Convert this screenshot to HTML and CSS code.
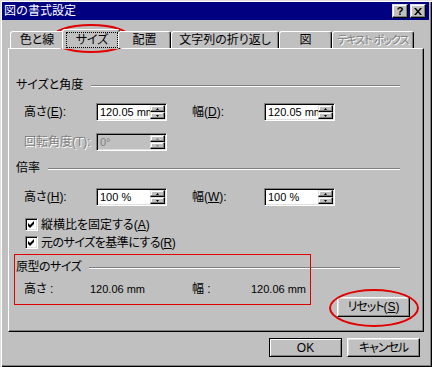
FILE: index.html
```html
<!DOCTYPE html>
<html lang="ja">
<head>
<meta charset="utf-8">
<title>図の書式設定</title>
<link rel="stylesheet" href="styles.css">
</head>
<body>
<div class="dialog">
  <div class="titlebar">
    <span class="title">図の書式設定</span>
    <span class="tb-btns">
      <span class="tbb help">?</span>
      <span class="tbb close"><svg width="8" height="7" viewBox="0 0 8 7"><path d="M0 0h2l2 2.5L6 0h2L5 3.5 8 7H6L4 4.5 2 7H0l3-3.5z" fill="#000"/></svg></span>
    </span>
  </div>
  <div class="tabs">
    <div class="tab t1">色と線</div>
    <div class="tab sel t2"><span class="focus">サイズ</span></div>
    <div class="tab t3">配置</div>
    <div class="tab t4">文字列の折り返し</div>
    <div class="tab t5">図</div>
    <div class="tab t6 dis"><span class="kana">テキスト ボックス</span></div>
  </div>
  <div class="panel">
    <div class="ghead"><span>サイズと角度</span><i class="rule"></i></div>
    <div class="row r1">
      <span class="lbl">高さ(<u>E</u>):</span>
      <div class="spin"><span class="val">120.05 mm</span><span class="btns"><span class="sb"><svg width="3" height="2" viewBox="0 0 3 2"><path d="M1.5 0L3 2H0z" fill="#000"/></svg></span><span class="sb"><svg width="3" height="2" viewBox="0 0 3 2"><path d="M0 0h3L1.5 2z" fill="#000"/></svg></span></span></div>
      <span class="lbl lbl2">幅(<u>D</u>):</span>
      <div class="spin"><span class="val">120.05 mm</span><span class="btns"><span class="sb"><svg width="3" height="2" viewBox="0 0 3 2"><path d="M1.5 0L3 2H0z" fill="#000"/></svg></span><span class="sb"><svg width="3" height="2" viewBox="0 0 3 2"><path d="M0 0h3L1.5 2z" fill="#000"/></svg></span></span></div>
    </div>
    <div class="row r2">
      <span class="lbl dis">回転角度(T):</span>
      <div class="spin off"><span class="val">0°</span><span class="btns"><span class="sb"><svg width="3" height="2" viewBox="0 0 3 2"><path d="M1.5 0L3 2H0z" fill="#808080"/></svg></span><span class="sb"><svg width="3" height="2" viewBox="0 0 3 2"><path d="M0 0h3L1.5 2z" fill="#808080"/></svg></span></span></div>
    </div>
    <div class="ghead g2"><span>倍率</span><i class="rule"></i></div>
    <div class="row r3">
      <span class="lbl">高さ(<u>H</u>):</span>
      <div class="spin"><span class="val">100 %</span><span class="btns"><span class="sb"><svg width="3" height="2" viewBox="0 0 3 2"><path d="M1.5 0L3 2H0z" fill="#000"/></svg></span><span class="sb"><svg width="3" height="2" viewBox="0 0 3 2"><path d="M0 0h3L1.5 2z" fill="#000"/></svg></span></span></div>
      <span class="lbl lbl2">幅(<u>W</u>):</span>
      <div class="spin"><span class="val">100 %</span><span class="btns"><span class="sb"><svg width="3" height="2" viewBox="0 0 3 2"><path d="M1.5 0L3 2H0z" fill="#000"/></svg></span><span class="sb"><svg width="3" height="2" viewBox="0 0 3 2"><path d="M0 0h3L1.5 2z" fill="#000"/></svg></span></span></div>
    </div>
    <div class="chk c1"><span class="box"><svg width="7" height="7" viewBox="0 0 7 7"><path d="M0 2L2 4L6 0V3L2 7L0 5Z" fill="#000"/></svg></span><span>縦横比を固定する(<u>A</u>)</span></div>
    <div class="chk c2"><span class="box"><svg width="7" height="7" viewBox="0 0 7 7"><path d="M0 2L2 4L6 0V3L2 7L0 5Z" fill="#000"/></svg></span><span class="tight">元のサイズを基準にする(<u>R</u>)</span></div>
    <div class="ghead g3"><span class="tight">原型のサイズ</span><i class="rule"></i></div>
    <div class="lastrow">
      <div class="vals">
        <span class="vl1">高さ :</span>
        <span class="num vv1">120.06 mm</span>
        <span class="vl2">幅 :</span>
        <span class="num">120.06 mm</span>
      </div>
      <div class="btn reset"><span class="kana">リセット</span>(<u>S</u>)</div>
    </div>
  </div>
  <div class="actions">
    <div class="btn default">OK</div>
    <div class="btn"><span class="kana">キャンセル</span></div>
  </div>
  <div class="mark mark-tab"></div>
  <div class="mark mark-box"></div>
  <div class="mark mark-reset"></div>
</div>
</body>
</html>
```

FILE: styles.css
```css
* { box-sizing: border-box; }
html, body { margin: 0; padding: 0; }
body {
  background: #c0c0c0;
  font-family: "Liberation Sans", "Noto Sans CJK JP", sans-serif;
  font-size: 12px;
  color: #000;
  font-feature-settings: "palt";
}
u { text-decoration: underline; text-underline-offset: 1px; }
.kana { letter-spacing: -1px; }
.tight { letter-spacing: -0.5px; }

.dialog {
  position: relative;
  width: 432px;
  height: 367px;
  background: #c0c0c0;
  padding-top: 2px;
  box-shadow: inset 1px 1px #dfdfdf, inset 2px 2px #fff, inset -1px -1px #000, inset -2px -2px #808080;
  overflow: hidden;
}

.titlebar {
  margin: 0 3px 0 2px;
  height: 18px;
  background: #000080;
  color: #fff;
  display: flex;
  align-items: center;
  padding: 0 3px 0 2px;
}
.title { font-feature-settings: normal; line-height: 14px; }
.tb-btns { margin-left: auto; display: flex; gap: 2px; }
.tbb {
  width: 16px; height: 14px;
  background: #c0c0c0;
  border: 1px solid; border-color: #dfdfdf #000 #000 #dfdfdf;
  box-shadow: inset -1px -1px #808080, inset 1px 1px #fff;
  display: flex; align-items: center; justify-content: center;
  color: #000;
  font-weight: bold;
  font-size: 11px;
  line-height: 10px;
}

.tabs {
  margin: 9px 0 0 8px;
  padding-left: 2px;
  height: 19px;
  display: flex;
  align-items: flex-end;
  position: relative;
  z-index: 1;
}
.tab {
  height: 17px;
  background: #c0c0c0;
  border-top: 1px solid #fff;
  border-left: 1px solid #fff;
  border-right: 1px solid #000;
  box-shadow: inset -1px 0 #808080;
  border-radius: 3px 3px 0 0;
  display: flex; align-items: center; justify-content: center;
  white-space: nowrap;
  line-height: 14px;
}
.t1 { width: 54px; }
.t2 { width: 58px; }
.t3 { width: 53px; }
.t4 { width: 108px; }
.t5 { width: 53px; }
.t6 { width: 82px; font-size: 11px; }
.tab.sel {
  height: 20px;
  margin: 0 -2px -1px;
  align-items: stretch;
  padding: 2px 1px 1px 3px;
}
.focus {
  flex: 1;
  border: 1px dotted #000;
  display: flex; align-items: center; justify-content: center;
}
.dis { color: #808080; text-shadow: 1px 1px #fff; }

.panel {
  margin-left: 8px;
  width: 416px;
  height: 284px;
  border-top: 1px solid #fff;
  border-left: 1px solid #fff;
  border-right: 1px solid #000;
  border-bottom: 1px solid #000;
  box-shadow: inset -1px -1px #808080;
  padding: 29px 13px 0 7px;
  display: flex;
  flex-direction: column;
}

.ghead {
  display: flex;
  align-items: center;
  height: 14px;
  margin-right: 10px;
  line-height: 14px;
  white-space: nowrap;
}
.rule {
  flex: 1;
  height: 2px;
  margin: 2px 0 0 8px;
  border-top: 1px solid #808080;
  border-bottom: 1px solid #fff;
}

.row {
  display: flex;
  align-items: center;
  height: 18px;
  padding-left: 8px;
  white-space: nowrap;
}
.r1 { margin-top: 11px; }
.r2 { margin-top: 12px; }
.g2 { margin-top: 10px; }
.r3 { margin-top: 13px; }
.lbl { width: 72px; line-height: 14px; }
.lbl2 { margin-left: 25px; }

.spin {
  width: 71px; height: 18px;
  display: flex;
  border: 1px solid; border-color: #808080 #fff #fff #808080;
  box-shadow: inset 1px 1px #000, inset -1px -1px #dfdfdf;
  background: #fff;
  padding: 1px;
}
.spin .val {
  flex: 1;
  overflow: hidden;
  white-space: nowrap;
  font-size: 11px;
  line-height: 14px;
  padding-left: 2px;
}
.spin .btns { width: 15px; display: flex; flex-direction: column; }
.sb {
  flex: 1;
  background: #c0c0c0;
  border: 1px solid; border-color: #dfdfdf #000 #000 #dfdfdf;
  box-shadow: inset -1px -1px #808080, inset 1px 1px #fff;
  display: flex; align-items: center; justify-content: center;
}
.sb svg { display: block; }
.spin.off { background: #c0c0c0; }
.spin.off .val { color: #808080; }

.chk {
  display: flex;
  align-items: center;
  height: 13px;
  padding-left: 9px;
  line-height: 14px;
  white-space: nowrap;
}
.c1 { margin-top: 12px; }
.c2 { margin-top: 5px; }
.box {
  width: 13px; height: 13px;
  border: 1px solid; border-color: #808080 #fff #fff #808080;
  box-shadow: inset 1px 1px #000, inset -1px -1px #dfdfdf;
  background: #fff;
  margin-right: 3px;
  display: flex; align-items: center; justify-content: center;
}
.box svg { display: block; }
.g3 { margin-top: 11px; }

.lastrow { display: flex; align-items: flex-start; margin-top: 8px; }
.vals { display: flex; align-items: center; height: 14px; padding-left: 8px; line-height: 14px; white-space: nowrap; }
.vl1 { width: 66px; }
.vv1 { width: 102px; }
.vl2 { width: 59px; }
.num { font-size: 11px; }

.btn {
  width: 73px; height: 19px;
  background: #c0c0c0;
  border: 1px solid; border-color: #fff #000 #000 #fff;
  box-shadow: inset -1px -1px #808080, inset 1px 1px #dfdfdf;
  display: flex; align-items: center; justify-content: center;
  line-height: 14px;
  white-space: nowrap;
}
.btn.default {
  border-color: #000;
  box-shadow: inset 1px 1px #fff, inset -1px -1px #808080;
}
.reset { margin-left: auto; margin-top: 15px; height: 20px; }

.actions {
  display: flex;
  justify-content: flex-end;
  gap: 5px;
  padding-right: 12px;
  margin-top: 6px;
}

.mark {
  position: absolute;
  border: 2px solid #e00000;
  border-radius: 50%;
  pointer-events: none;
}
.mark-tab { left: 50px; top: 24px; width: 82px; height: 29px; }
.mark-reset { left: 329px; top: 289px; width: 90px; height: 38px; }
.mark-box { left: 14px; top: 254px; width: 297px; height: 51px; border-radius: 0; border-width: 1px; }
```
